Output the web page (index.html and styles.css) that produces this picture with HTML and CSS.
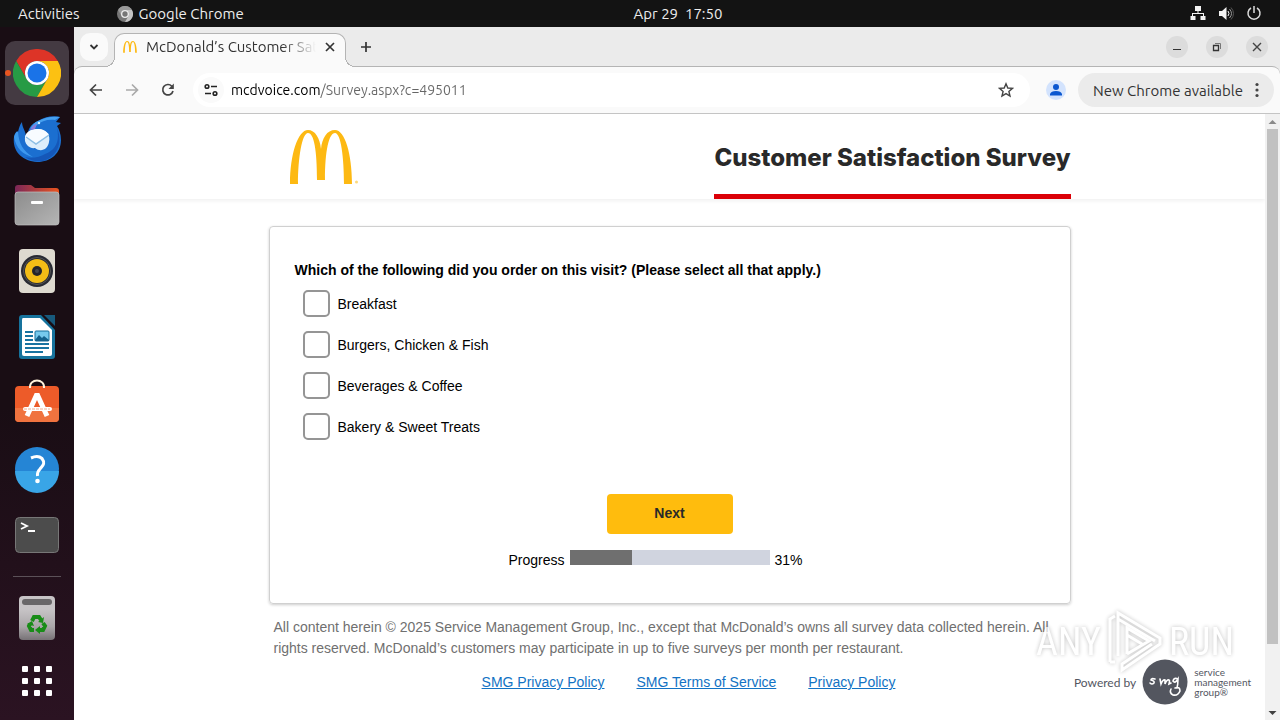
FILE: index.html
```
<!DOCTYPE html>
<html lang="en">
  <head>
    <meta charset="utf-8" />
    <meta content="width=device-width, initial-scale=1" name="viewport" />
    <title>McDonald’s Customer Satisfaction Survey</title>
    <link rel="stylesheet" href="styles.css">
  </head>
  <body>
    <div class="topbar">
      <div class="topbar-left">
        <button class="plain">Activities</button>
        <button class="plain app-menu">
          <svg width="16" height="16" viewBox="0 0 48 48">
            <circle cx="24" cy="24" r="24" fill="#777"/>
            <path d="M24 12H44.8A24 24 0 0 0 3.2 12L13.6 30A12 12 0 0 1 24 12z" fill="#999"/>
            <path d="M34.4 30L24 48A24 24 0 0 0 44.8 12H24A12 12 0 0 1 34.4 30z" fill="#c4c4c4"/>
            <circle cx="24" cy="24" r="12" fill="#eee"/>
            <circle cx="24" cy="24" r="8" fill="#777"/>
          </svg>
          Google Chrome
        </button>
      </div>
      <button class="plain clock">Apr 29&nbsp; 17:50</button>
      <div class="topbar-right">
        <svg width="16" height="16" viewBox="0 0 16 16" fill="#f2f2f2">
          <path d="M5 0h6v5H8.500v2H14v3h1.500v4h-5v-4H13V8H3v2h2.500v4h-5v-4H2V7h5.500V5H5z"/>
        </svg>
        <svg width="16" height="16" viewBox="0 0 16 16" fill="none" stroke="#f2f2f2">
          <path d="M1 5h3L8.500 1v13L4 10H1z" fill="#f2f2f2" stroke="none"/>
          <path d="M10 5q2 2.500 0 5"/>
          <path d="M11.500 3q4 4.500 0 9" stroke="#999"/>
          <path d="M13 1.500q5 6 0 12" stroke="#555"/>
        </svg>
        <svg width="16" height="16" viewBox="0 0 16 16" fill="none" stroke="#ddd" stroke-width="1.500">
          <path d="M5 2a6 6 0 1 0 6 0M8 0v7"/>
        </svg>
      </div>
    </div>

    <div class="desktop">
      <nav class="dock">
        <button class="dock-item active" aria-label="Google Chrome">
          <svg width="48" height="48" viewBox="0 0 48 48">
            <path d="M24 12H44.8A24 24 0 0 0 3.2 12L13.6 30A12 12 0 0 1 24 12z" fill="#dd3427"/>
            <path d="M13.600 30L3.200 12A24 24 0 0 0 24 48L34.400 30A12 12 0 0 1 13.600 30z" fill="#279b45"/>
            <path d="M34.400 30L24 48A24 24 0 0 0 44.800 12H24A12 12 0 0 1 34.400 30z" fill="#fcc112"/>
            <circle cx="24" cy="24" r="12" fill="#fff"/>
            <circle cx="24" cy="24" r="9.500" fill="#1a73e8"/>
          </svg>
        </button>
        <button class="dock-item" aria-label="Thunderbird">
          <svg width="48" height="48" viewBox="0 0 48 48">
            <path d="M9 7C6 11 6 14 5 17C4 15 2 18 1 22C-1 36 9 46 24 47C38 47 48 38 48 25C48 19 46 14 44 11L48 8L43 7L47 2C40 0 31 2 25 6C18 9 15 14 15 19L13 22C13 16 9 13 9 7z" fill="#1b6fd0"/>
            <path d="M25 6C32 2 40 1 47 2L42 5C35 4 28 6 24 10L17 14C19 10 22 7 25 6z" fill="#46a0f0"/>
            <path d="M1 22C3 33 10 40 20 42C10 36 6 29 5 17C4 16 2 18 1 22z" fill="#3d98ee"/>
            <path d="M32 39C43 35 47 26 44 13C50 27 45 42 30 46C23 47 16 45 12 42C19 44 27 42 32 39z" fill="#1557b8"/>
            <path d="M12 26C11 18 17 14 25 14C33 14 38 20 36 27C35 34 28 38 22 33C17 34 13 30 12 26z" fill="#dceefb"/>
            <path d="M12 23L23 28L36 20C33 15 28 14 24 14C17 14 12 18 12 23z" fill="#f8fcff"/>
            <path d="M13 22L23 29L36 20" fill="none" stroke="#8dbfe4" stroke-width="1.500"/>
            <path d="M17 15C19 11 22 9 24 9L22 14z" fill="#8a78d8"/>
            <circle cx="26" cy="8" r="1.200" fill="#d9f1ff"/>
          </svg>
        </button>
        <button class="dock-item" aria-label="Files">
          <svg width="48" height="48" viewBox="0 0 48 48">
            <defs>
              <linearGradient id="folder" x2="1"><stop offset="0" stop-color="#7b2758"/><stop offset="1" stop-color="#e9541f"/></linearGradient>
              <linearGradient id="front" x2="1" y2="1"><stop offset="0" stop-color="#8c8c8c"/><stop offset="1" stop-color="#b5b5b5"/></linearGradient>
            </defs>
            <path d="M2 7q0-3 3-3h13l4 3h21q3 0 3 3v15H2z" fill="url(#folder)"/>
            <rect x="2" y="11" width="44" height="33" rx="3" fill="url(#front)" stroke="#c0c0c0" stroke-width=".7"/>
            <rect x="18" y="20" width="12" height="3" rx="1" fill="#fff"/>
          </svg>
        </button>
        <button class="dock-item" aria-label="Rhythmbox">
          <svg width="48" height="48" viewBox="0 0 48 48">
            <rect x="6" y="2" width="36" height="44" rx="4" fill="#dedad0"/>
            <circle cx="24" cy="24" r="16" fill="#282a33"/>
            <circle cx="24" cy="24" r="13.500" fill="none" stroke="#555" stroke-width="1"/>
            <circle cx="24" cy="24" r="12" fill="#f3bd16"/>
            <circle cx="24" cy="24" r="5" fill="#24252b"/>
            <circle cx="24" cy="24" r="2" fill="#44464d"/>
          </svg>
        </button>
        <button class="dock-item" aria-label="LibreOffice Writer">
          <svg width="48" height="48" viewBox="0 0 48 48">
            <path d="M9 2H42V43Q42 46 39 46H9Q6 46 6 43V5Q6 2 9 2z" fill="#16739d"/>
            <path d="M28 2L42 17V11L34 2z" fill="#190d14"/>
            <path d="M31 2H42V13z" fill="#17597c"/>
            <path d="M10 5H27L39 17V41Q39 43 37 43H11Q9 43 9 41V7Q9 5 10 5z" fill="#fff"/>
            <path d="M12 19h8M12 23h8M12 27h8M12 31h24M12 35h24M12 39h18" stroke="#1873a1" stroke-width="2"/>
            <rect x="22" y="18" width="14" height="10" rx="1" fill="#76c9ed" stroke="#156f9c"/>
            <path d="M22 27l4-5 3 3 2-2 5 4v1H22z" fill="#14618c"/>
          </svg>
        </button>
        <button class="dock-item" aria-label="Ubuntu Software">
          <svg width="48" height="48" viewBox="0 0 48 48">
            <rect x="2" y="7" width="44" height="36" rx="4" fill="#ed5b29"/>
            <path d="M2 29h44v10q0 4-4 4H6q-4 0-4-4z" fill="#f0733f"/>
            <path d="M17 9C16-1 32-1 31 9" fill="none" stroke="#fff3dc" stroke-width="2"/>
            <path d="M14 37L24 15L34 37" fill="none" stroke="#fff" stroke-width="5" stroke-linejoin="bevel"/>
            <path d="M12 30h25" stroke="#fff" stroke-width="4" stroke-linecap="round"/>
            <path d="M11 30h26" stroke="#f0ad92" stroke-dasharray="3 1"/>
          </svg>
        </button>
        <button class="dock-item" aria-label="Help">
          <svg width="48" height="48" viewBox="0 0 48 48">
            <circle cx="24" cy="24" r="22" fill="#2585d5"/>
            <path d="M2 26H46A22 22 0 0 1 2 26z" fill="#39a5e7"/>
            <path d="M18 13Q25 10 29 13.500C33 19 29 21 27 24Q24 27 24.500 31" fill="none" stroke="#fff" stroke-width="3"/>
            <circle cx="24.500" cy="36" r="2.300" fill="#fff"/>
          </svg>
        </button>
        <button class="dock-item" aria-label="Terminal">
          <svg width="48" height="48" viewBox="0 0 48 48">
            <rect x="2.500" y="6.500" width="43" height="35" rx="4" fill="#4c4c4c" stroke="#777"/>
            <path d="M8 12l6 3-6 3M15 20h7" fill="none" stroke="#fff" stroke-width="1.800"/>
          </svg>
        </button>
        <hr class="dock-line">
        <button class="dock-item" aria-label="Trash">
          <svg width="48" height="48" viewBox="0 0 48 48">
            <defs><linearGradient id="bin" x2="0" y2="1"><stop offset=".3" stop-color="#c7c4c6"/><stop offset=".7" stop-color="#aaa6a9"/><stop offset="1" stop-color="#777276"/></linearGradient></defs>
            <rect x="6" y="2" width="36" height="44" rx="4" fill="url(#bin)"/>
            <rect x="9" y="5" width="30" height="6" rx="3" fill="#696769"/>
            <g fill="none" stroke="#198c18" stroke-width="4">
              <path d="M19 27l2-4h5l2 3M30 29l2 3-2 4h-3M21 36h-3l-2-4 1-2"/>
            </g>
            <path d="M25 28l5 1 1-6zM27 32v8l-5-4zM14 30l5-3 2 5z" fill="#198c18"/>
          </svg>
        </button>
        <button class="dock-item apps" aria-label="Show Applications">
          <svg width="48" height="48" viewBox="0 0 48 48" fill="#fff">
            <rect x="9" y="9" width="6" height="6" rx="1"/><rect x="21" y="9" width="6" height="6" rx="1"/><rect x="33" y="9" width="6" height="6" rx="1"/>
            <rect x="9" y="21" width="6" height="6" rx="1"/><rect x="21" y="21" width="6" height="6" rx="1"/><rect x="33" y="21" width="6" height="6" rx="1"/>
            <rect x="9" y="33" width="6" height="6" rx="1"/><rect x="21" y="33" width="6" height="6" rx="1"/><rect x="33" y="33" width="6" height="6" rx="1"/>
          </svg>
        </button>
      </nav>

      <div class="browser">
        <div class="tabstrip">
          <button class="tab-search" aria-label="Search tabs">
            <svg width="10" height="10" viewBox="0 0 10 10"><path d="M1.500 3L5 6.500L8.500 3" fill="none" stroke="#333" stroke-width="1.800"/></svg>
          </button>
          <div class="tab">
            <svg width="14" height="12" viewBox="0 0 64 56" fill="#fdb913">
              <path d="M18 0C27 0 31 10 32 20C33 10 37 0 46 0C57 0 64 24 64 55H56C56 26 52 5 46 5C39 5 36 24 36 51H28C28 24 25 5 18 5C12 5 8 26 8 55H0C0 24 7 0 18 0z"/>
            </svg>
            <span class="tab-title">McDonald’s Customer Satisfaction</span>
            <button class="plain" aria-label="Close tab">
              <svg width="10" height="10" viewBox="0 0 10 10"><path d="M1 1l8 8M9 1L1 9" stroke="#333" stroke-width="1.700"/></svg>
            </button>
          </div>
          <button class="plain new-tab" aria-label="New tab">
            <svg width="12" height="12" viewBox="0 0 12 12"><path d="M6 1v10M1 6h10" stroke="#333" stroke-width="1.700"/></svg>
          </button>
          <div class="window-buttons">
            <button aria-label="Minimize"><svg width="10" height="10" viewBox="0 0 10 10"><path d="M1 7.500h8" stroke="#333"/></svg></button>
            <button aria-label="Restore"><svg width="10" height="10" viewBox="0 0 10 10" fill="none" stroke="#333"><path d="M1.500 3.500h5v5h-5z" stroke-width="1.300"/><path d="M3 1.500h5.500V7" stroke="#777"/></svg></button>
            <button aria-label="Close"><svg width="10" height="10" viewBox="0 0 10 10"><path d="M1 1l8 8M9 1L1 9" stroke="#444" stroke-width="1.400"/></svg></button>
          </div>
        </div>

        <div class="toolbar">
          <button class="plain nav" aria-label="Back"><svg width="16" height="16" viewBox="0 0 16 16"><path d="M14 8H3M8 2.500L2.500 8L8 13.500" fill="none" stroke="#444" stroke-width="1.700"/></svg></button>
          <button class="plain nav" aria-label="Forward"><svg width="16" height="16" viewBox="0 0 16 16"><path d="M2 8h11M8 2.500L13.500 8L8 13.500" fill="none" stroke="#aaa" stroke-width="1.700"/></svg></button>
          <button class="plain nav" aria-label="Reload"><svg width="16" height="16" viewBox="0 0 16 16"><path d="M13 9a5.200 5.200 0 1 1-1.200-4.800L13 5.500" fill="none" stroke="#444" stroke-width="1.700"/><path d="M13.800 1.500v5.500H8.500z" fill="#444"/></svg></button>
          <div class="omnibox">
            <button class="plain site-info" aria-label="View site information">
              <svg width="16" height="16" viewBox="0 0 16 16" fill="none" stroke="#222" stroke-width="1.600"><circle cx="4" cy="4.500" r="1.800"/><path d="M8 4.500h6M2 11.500h6"/><circle cx="12" cy="11.500" r="1.800"/></svg>
            </button>
            <input class="url" type="text" aria-label="Address" value="mcdvoice.com/Survey.aspx?c=495011">
            <button class="plain" aria-label="Bookmark this tab">
              <svg width="16" height="16" viewBox="0 0 16 16"><path d="M8 1.800L9.800 6l4.700.4-3.600 3 1.100 4.600L8 11.600 4 14l1.100-4.600-3.600-3L6.200 6z" fill="none" stroke="#444" stroke-width="1.400"/></svg>
            </button>
          </div>
          <button class="plain profile" aria-label="You">
            <svg width="20" height="20" viewBox="0 0 20 20"><circle cx="10" cy="10" r="10" fill="#d3e3fd"/><circle cx="10" cy="7" r="3" fill="#0b57d0"/><path d="M4 15.500v-1.500q1-3 6-3t6 3v1.500z" fill="#0b57d0"/></svg>
          </button>
          <button class="update">
            New Chrome available
            <svg width="4" height="16" viewBox="0 0 4 16" fill="#444"><circle cx="2" cy="2.500" r="1.600"/><circle cx="2" cy="8" r="1.600"/><circle cx="2" cy="13.500" r="1.600"/></svg>
          </button>
        </div>

        <div class="viewport">
          <div class="page">
            <header class="survey-header">
              <div class="header-inner">
                <svg class="arches" width="70" height="56" viewBox="0 0 70 56" fill="#fdb913">
                  <path d="M18 0C25 0 30 8 31 19C32 8 37 0 45 0C55 0 62 24 62 54H54C54 28 51 3 45 3C39 3 35 20 35 50H27C27 20 24 3 18 3C12 3 8 28 8 54H0C0 24 8 0 18 0z"/>
                  <circle cx="66.500" cy="52" r="1.500" fill="#fcd97e"/>
                </svg>
                <h1>Customer Satisfaction Survey</h1>
              </div>
            </header>

            <form class="card">
              <fieldset>
                <legend>Which of the following did you order on this visit? (Please select all that apply.)</legend>
                <label><input type="checkbox" name="breakfast">Breakfast</label>
                <label><input type="checkbox" name="burgers">Burgers, Chicken &amp; Fish</label>
                <label><input type="checkbox" name="beverages">Beverages &amp; Coffee</label>
                <label><input type="checkbox" name="bakery">Bakery &amp; Sweet Treats</label>
              </fieldset>
              <button class="next" type="button">Next</button>
              <div class="progress-row">
                <label for="progress">Progress</label>
                <progress id="progress" value="31" max="100"></progress>
                <span>31%</span>
              </div>
            </form>

            <footer>
              <p class="legal">All content herein © 2025 Service Management Group, Inc., except that McDonald’s owns all survey data collected herein. All rights reserved. McDonald’s customers may participate in up to five surveys per month per restaurant.</p>
              <div class="footer-row">
                <div class="links">
                  <a href="#">SMG Privacy Policy</a>
                  <a href="#">SMG Terms of Service</a>
                  <a href="#">Privacy Policy</a>
                </div>
                <div class="smg">
                  <span class="powered">Powered by</span>
                  <svg width="46" height="46" viewBox="0 0 46 46">
                    <circle cx="23" cy="23" r="22.500" fill="#53565f"/>
                    <path d="M13 20Q9 19 9 21Q13 22 12 24Q10 26 8 24M18 20l1 5q2-5 4-4l0 4q2-5 4-4q1 0 0 4l2-1M36 20q-4-2-5 2q2 3 5-2q0 5-1 9M33 29q5-2 5 3q-2 5-7 4q-4-2-2-6" fill="none" stroke="#fff" stroke-width="1.600" stroke-linecap="round"/>
                  </svg>
                  <span class="smg-name">service<br>management<br>group®</span>
                </div>
              </div>
            </footer>
          </div>
          <div class="scrollbar">
            <svg width="15" height="15" viewBox="0 0 15 15"><path d="M3.500 10L7.500 6L11.500 10z" fill="#8a8a8a"/></svg>
            <div class="thumb"></div>
            <svg width="15" height="15" viewBox="0 0 15 15"><path d="M3.500 6L7.500 10L11.500 6z" fill="#404040"/></svg>
          </div>
        </div>
      </div>
    </div>

    <div class="watermark">
      <span>ANY</span>
      <svg width="60" height="64" viewBox="0 0 60 64" fill="none" stroke="#fff" stroke-width="3">
        <path d="M13 46V3L55 28V34L17 60V54L47 34M5 52V9l5-3M22 44V18L44 31L22 44M22 25L37 34M13 9L50 31M5 52h5"/>
      </svg>
      <span>RUN</span>
    </div>
  </body>
</html>
```

FILE: styles.css
```
* {
  box-sizing: border-box;
}
html, body {
  height: 100%;
  margin: 0;
}
body {
  display: flex;
  flex-direction: column;
  overflow: hidden;
  font-family: "Ubuntu", "Noto Sans", sans-serif;
  font-size: 15px;
  color: #333;
}
button {
  border: 0;
  color: inherit;
  font: inherit;
}
svg {
  display: block;
  flex: none;
}
.plain {
  background: none;
  padding: 0;
  white-space: nowrap;
}

/* top bar */
.topbar {
  align-items: center;
  background-color: #131313;
  color: #ededed;
  display: grid;
  flex: none;
  grid-template-columns: 1fr auto 1fr;
  height: 27px;
  padding: 0 18px;
}
.topbar-left {
  display: flex;
  gap: 37px;
}
.app-menu {
  align-items: center;
  display: flex;
  gap: 6px;
}
.clock {
  padding-left: 76px;
}
.topbar-right {
  display: flex;
  gap: 12px;
  justify-content: flex-end;
}

/* dock */
.desktop {
  display: flex;
  flex: 1;
  min-height: 0;
}
.dock {
  align-items: center;
  background: linear-gradient(#190d14 55%, #2b1322);
  display: flex;
  flex: none;
  flex-direction: column;
  gap: 2px;
  padding-top: 14px;
  width: 74px;
}
.dock-item {
  align-items: center;
  background: none;
  border-radius: 10px;
  display: flex;
  flex: none;
  height: 64px;
  justify-content: center;
  padding: 0;
  position: relative;
  width: 64px;
}
.dock-item.active {
  background-color: #443a42;
}
.dock-item.active::before {
  background-color: #e95420;
  border-radius: 50%;
  content: "";
  height: 6px;
  left: 0;
  position: absolute;
  top: 29px;
  width: 6px;
}
.dock-item.apps {
  height: 58px;
}
.dock-line {
  background-color: #5b5158;
  border: 0;
  flex: none;
  height: 1px;
  margin: 7px 0;
  width: 48px;
}

/* browser window */
.browser {
  background-color: #ebebeb;
  display: flex;
  flex: 1;
  flex-direction: column;
  min-width: 0;
}
.tabstrip {
  align-items: center;
  display: flex;
  flex: none;
  height: 39px;
  padding: 0 12px 0 6px;
}
.tab-search {
  align-items: center;
  background-color: #fafafa;
  border-radius: 10px;
  display: flex;
  height: 28px;
  justify-content: center;
  padding: 0;
  width: 28px;
}
.tab {
  align-items: center;
  align-self: flex-end;
  background-color: #fafafa;
  border: 1px solid #b4b4b4;
  border-bottom: 0;
  border-radius: 10px 10px 0 0;
  display: flex;
  gap: 9px;
  height: 34px;
  margin: 0 0 -1px 6px;
  padding: 0 10px 8px 8px;
  position: relative;
  width: 232px;
  z-index: 1;
}
/* curved feet of the tab */
.tab::before, .tab::after {
  bottom: 0;
  content: "";
  height: 10px;
  position: absolute;
  width: 10px;
}
.tab::before {
  background: radial-gradient(circle at 0 0, #ebebeb 9px, #b4b4b4 9px 10px, #fafafa 10px);
  left: -10px;
}
.tab::after {
  background: radial-gradient(circle at 100% 0, #ebebeb 9px, #b4b4b4 9px 10px, #fafafa 10px);
  right: -10px;
}
.tab-title {
  flex: 1;
  -webkit-mask-image: linear-gradient(90deg, #000 80%, transparent);
  mask-image: linear-gradient(90deg, #000 80%, transparent);
  overflow: hidden;
  white-space: nowrap;
}
.new-tab {
  margin-left: 14px;
}
.window-buttons {
  display: flex;
  gap: 18px;
  margin-left: auto;
}
.window-buttons button {
  align-items: center;
  background-color: #dcdcdc;
  border-radius: 50%;
  display: flex;
  height: 22px;
  justify-content: center;
  padding: 0;
  width: 22px;
}
.toolbar {
  align-items: center;
  background-color: #fafafa;
  border-bottom: 1px solid #c4c4c4;
  border-radius: 8px 8px 0 0;
  border-top: 1px solid #b4b4b4;
  display: flex;
  flex: none;
  height: 48px;
  padding: 0 6px 0 14px;
}
.nav {
  margin-right: 20px;
}
.omnibox {
  align-items: center;
  background-color: #fff;
  border-radius: 17px;
  display: flex;
  flex: 1;
  height: 34px;
  margin-left: -3px;
  padding: 0 16px 0 5px;
}
.site-info {
  background-color: #fafafa;
  border-radius: 50%;
  padding: 5px;
}
.url {
  /* host in black, the rest of the address in grey */
  background: linear-gradient(90deg, #000 89px, #666 89px);
  -webkit-background-clip: text;
  background-clip: text;
  border: 0;
  color: transparent;
  flex: 1;
  font: inherit;
  font-size: 14px;
  margin-left: 7px;
  min-width: 0;
  padding: 0;
}
.profile {
  margin: 0 12px 0 16px;
}
.update {
  align-items: center;
  background-color: #ebebeb;
  border-radius: 17px;
  display: flex;
  gap: 12px;
  height: 34px;
  padding: 0 15px;
  white-space: nowrap;
}

/* survey page */
.viewport {
  background-color: #fff;
  display: flex;
  flex: 1;
  min-height: 0;
}
.page {
  color: #000;
  flex: 1;
  font-family: "Liberation Sans", Arial, sans-serif;
  font-size: 14px;
  overflow: hidden;
}
.survey-header {
  box-shadow: 0 2px 4px rgba(0, 0, 0, .06);
}
.header-inner, .card, .legal {
  margin: 0 auto;
  max-width: 802px;
}
.header-inner {
  align-items: flex-start;
  display: flex;
  height: 85px;
  justify-content: space-between;
}
.arches {
  margin: 16px 0 0 21px;
}
h1 {
  border-bottom: 5px solid #db0007;
  color: #292929;
  font-family: "Inter", sans-serif;
  font-size: 24px;
  font-weight: 800;
  height: 85px;
  line-height: 32px;
  margin: 0;
  padding-top: 28px;
}
.card {
  border: 1px solid #d0d0d0;
  border-radius: 4px;
  box-shadow: 0 1px 3px rgba(0, 0, 0, .2);
  margin-top: 27px;
  padding: 35px 24px 33px;
}
fieldset {
  border: 0;
  display: flex;
  flex-direction: column;
  gap: 14px;
  margin: 0;
  padding: 0;
}
legend {
  font-weight: bold;
  line-height: 16px;
  padding: 0 0 12px 1px;
}
fieldset label {
  align-items: center;
  align-self: flex-start;
  display: flex;
  gap: 8px;
  margin-left: 9px;
}
input[type=checkbox] {
  appearance: none;
  background-color: #fff;
  border: 2px solid #959595;
  border-radius: 5px;
  height: 27px;
  margin: 0;
  width: 27px;
}
.next {
  background-color: #ffbc0d;
  border-radius: 4px;
  color: #292929;
  display: block;
  font-weight: bold;
  height: 40px;
  margin: 54px auto 16px;
  padding: 0 0 2px;
  width: 126px;
}
.progress-row {
  display: flex;
  gap: 5px;
  justify-content: center;
  line-height: 20px;
  padding-right: 28px;
}
progress {
  appearance: none;
  border: 0;
  height: 15px;
  width: 200px;
}
progress::-webkit-progress-bar {
  background-color: #d0d4df;
}
progress::-webkit-progress-value {
  background-color: #6f6f6f;
}
.legal {
  color: #707070;
  line-height: 21px;
  padding: 13px 0 0 5px;
}
.footer-row {
  align-items: center;
  display: grid;
  grid-template-columns: 1fr auto 1fr;
  padding: 0 14px 0 52px;
}
.links {
  display: flex;
  gap: 32px;
  grid-column: 2;
}
.links a {
  color: #1272c4;
}
.smg {
  align-items: center;
  color: #53565f;
  display: flex;
  gap: 6px;
  justify-self: end;
}
.powered {
  font-family: "Lato", sans-serif;
  font-size: 12px;
}
.smg-name {
  font-family: "Lato", sans-serif;
  font-size: 10px;
  line-height: 10px;
}

/* scrollbar */
.scrollbar {
  align-items: center;
  background-color: #f1f1f1;
  display: flex;
  flex: none;
  flex-direction: column;
  justify-content: space-between;
  width: 15px;
}
.thumb {
  background-color: #c1c1c1;
  height: 85%;
  margin-bottom: auto;
  width: 11px;
}

.watermark {
  align-items: center;
  bottom: 46px;
  color: #fff;
  display: flex;
  filter: drop-shadow(0 0 2px rgba(0, 0, 0, .35));
  font-family: "Liberation Sans Narrow", "Roboto Condensed", "Roboto", sans-serif;
  font-size: 38px;
  gap: 4px;
  opacity: .7;
  pointer-events: none;
  position: absolute;
  right: 46px;
}
```
